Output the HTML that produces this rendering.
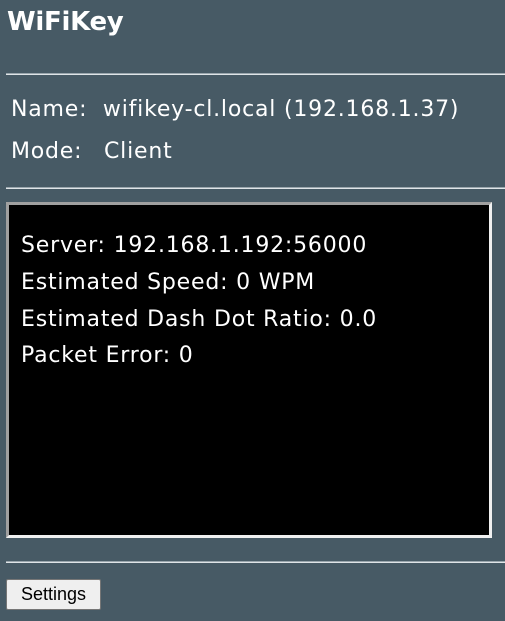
<!DOCTYPE html>
<html><head><style>
body{margin:0;background:#475a65;width:505px;height:621px;overflow:hidden;font-family:"DejaVu Sans",sans-serif;color:#fff;position:relative}
.a{position:absolute;white-space:nowrap}
h1{position:absolute;left:7px;top:7px;margin:0;font-size:26px;font-weight:bold;letter-spacing:-0.3px}
.hr{position:absolute;left:6px;right:0;height:0;border-top:1px solid #9aa6ad;border-bottom:1px solid #dfe4e7}
.t{font-size:22px;letter-spacing:0.8px}
.box{position:absolute;left:6px;top:202px;width:480px;height:330px;background:#000;border:3px solid;border-color:#a0a0a0 #f0f0f0 #f0f0f0 #a0a0a0}
.btn{position:absolute;left:6px;top:579px;width:93px;height:29px;background:#efefef;border:1px solid #767676;border-radius:2px;color:#000;font-size:18px;text-align:center;line-height:29px;font-family:"Liberation Sans",sans-serif}
</style></head><body>
<h1>WiFiKey</h1>
<div class="hr" style="top:73px"></div>
<div class="a t" style="left:11px;top:97px">Name:&nbsp; wifikey-cl.local (192.168.1.37)</div>
<div class="a t" style="left:11px;top:139px">Mode:</div>
<div class="a t" style="left:104px;top:139px">Client</div>
<div class="hr" style="top:187px"></div>
<div class="box"></div>
<div class="a t" style="left:21px;top:233px">Server: 192.168.1.192:56000</div>
<div class="a t" style="left:21px;top:270px">Estimated Speed: 0 WPM</div>
<div class="a t" style="left:21px;top:307px">Estimated Dash Dot Ratio: 0.0</div>
<div class="a t" style="left:21px;top:343px">Packet Error: 0</div>
<div class="hr" style="top:561px"></div>
<div class="btn">Settings</div>
</body></html>
